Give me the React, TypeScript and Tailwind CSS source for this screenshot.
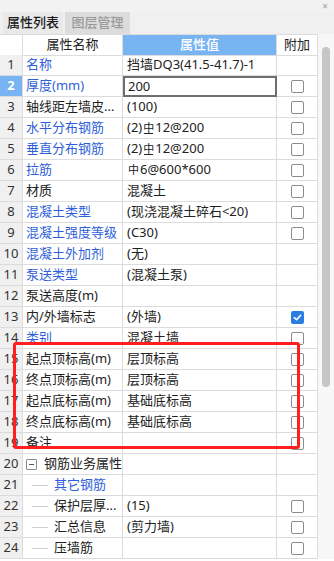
import type { ReactNode } from 'react';

const BLUE = 'text-[#2f5fd8]';

// rebar grade glyphs (HPB300 / HRB400)
function Bar({ grade }: { grade: 300 | 400 }) {
  return (
    <span className="relative inline-block text-[11px] leading-none mx-[1px] -translate-y-[1px]">
      中
      {grade === 400 && <span className="absolute left-[1px] right-[1px] bottom-[-1px] h-px bg-[#222]" />}
    </span>
  );
}

type Row = { name: ReactNode; value?: ReactNode; blue?: boolean; cb?: 'on' | 'off'; indent?: boolean; group?: boolean };

const rows: Row[] = [
  { name: '名称', value: '挡墙DQ3(41.5-41.7)-1', blue: true },
  { name: '厚度(mm)', value: '200', blue: true, cb: 'off' },
  { name: '轴线距左墙皮...', value: '(100)', cb: 'off' },
  { name: '水平分布钢筋', value: <>(2)<Bar grade={400} />12@200</>, blue: true, cb: 'off' },
  { name: '垂直分布钢筋', value: <>(2)<Bar grade={400} />12@200</>, blue: true, cb: 'off' },
  { name: '拉筋', value: <><Bar grade={300} />6@600*600</>, blue: true, cb: 'off' },
  { name: '材质', value: '混凝土', cb: 'off' },
  { name: '混凝土类型', value: '(现浇混凝土碎石<20)', blue: true, cb: 'off' },
  { name: '混凝土强度等级', value: '(C30)', blue: true, cb: 'off' },
  { name: '混凝土外加剂', value: '(无)', blue: true },
  { name: '泵送类型', value: '(混凝土泵)', blue: true },
  { name: '泵送高度(m)' },
  { name: '内/外墙标志', value: '(外墙)', cb: 'on' },
  { name: '类别', value: '混凝土墙', blue: true, cb: 'off' },
  { name: '起点顶标高(m)', value: '层顶标高', cb: 'off' },
  { name: '终点顶标高(m)', value: '层顶标高', cb: 'off' },
  { name: '起点底标高(m)', value: '基础底标高', cb: 'off' },
  { name: '终点底标高(m)', value: '基础底标高', cb: 'off' },
  { name: '备注', cb: 'off' },
  { name: '钢筋业务属性', group: true },
  { name: '其它钢筋', blue: true, indent: true },
  { name: '保护层厚...', value: '(15)', indent: true, cb: 'off' },
  { name: '汇总信息', value: '(剪力墙)', indent: true, cb: 'off' },
  { name: '压墙筋', indent: true, cb: 'off' },
];

function Check({ on }: { on: boolean }) {
  if (on)
    return (
      <span className="w-[13px] h-[13px] rounded-[2px] bg-[#2b7de0] flex items-center justify-center">
        <svg width="9" height="9" viewBox="0 0 10 10" fill="none" stroke="#fff" strokeWidth="1.8" strokeLinecap="round" strokeLinejoin="round">
          <path d="M1.5 5.2 4 7.5 8.5 2.5" />
        </svg>
      </span>
    );
  return <span className="w-[13px] h-[13px] rounded-[2px] border border-[#8c8c8c] bg-white" />;
}

export default function App() {
  return (
    <div
      className="relative w-[334px] h-[561px] bg-white overflow-hidden text-[13px] text-[#222]"
      style={{ fontFamily: '"Noto Sans", "Noto Sans CJK SC", sans-serif' }}
    >
      {/* title strip */}
      <div className="h-[12px] bg-[#f2f2f2] flex justify-end items-center pr-[6px]">
        <span className="text-[10px] leading-none text-[#9a9a9a]">×</span>
      </div>
      {/* tabs */}
      <div className="h-[22px] bg-[#f0f0f0] flex items-stretch pl-[3px] gap-[2px] border-l-[3px] border-[#e2e2e2] -ml-[3px]">
        <div className="w-[60px] bg-[#e9e9e9] flex items-center justify-center text-[#1a1a1a] font-medium">属性列表</div>
        <div className="w-[65px] bg-[#dcdcdc] flex items-center justify-center text-[#9a9a9a] font-medium">图层管理</div>
      </div>

      <div className="flex">
        <div className="w-[317px]">
          {/* header */}
          <div className="grid grid-cols-[23px_100px_154px_40px] h-[21px] border-t border-[#dcdcdc]">
            <div className="border-r border-b border-[#dcdcdc]" />
            <div className="border-r border-b border-[#dcdcdc] flex items-center justify-center">属性名称</div>
            <div className="bg-[#78b4f2] border-r border-b border-[#dcdcdc] flex items-center justify-center text-white font-medium">属性值</div>
            <div className="border-b border-[#dcdcdc] flex items-center justify-center">附加</div>
          </div>
          {rows.map((r, i) => {
            const sel = i === 1;
            return (
              <div key={i} className="grid grid-cols-[23px_100px_154px_40px] h-[21px]">
                <div
                  className={
                    sel
                      ? 'bg-[#78b4f2] text-white font-bold border-r border-b border-[#dcdcdc] flex items-center justify-center'
                      : 'bg-[#f0f0f0] text-[#333] border-r border-b border-[#dcdcdc] flex items-center justify-center'
                  }
                >
                  {i + 1}
                </div>
                <div className={`border-r border-b border-[#dcdcdc] flex items-center whitespace-nowrap overflow-hidden ${r.blue ? BLUE : ''}`}>
                  {r.group ? (
                    <>
                      <span className="ml-[3px] w-[11px] h-[11px] border border-[#8c8c8c] rounded-[1px] flex items-center justify-center">
                        <span className="w-[5px] h-px bg-[#555]" />
                      </span>
                      <span className="ml-[7px] text-[#222]">{r.name}</span>
                    </>
                  ) : r.indent ? (
                    <>
                      <span className="ml-[9px] w-[16px] h-px bg-[#d0d0d0]" />
                      <span className="ml-[6px]">{r.name}</span>
                    </>
                  ) : (
                    <span className="ml-[3px]">{r.name}</span>
                  )}
                </div>
                <div
                  className={
                    sel
                      ? 'border-2 border-[#6e6e6e] flex items-center pl-[3px] whitespace-nowrap overflow-hidden'
                      : 'border-r border-b border-[#dcdcdc] flex items-center pl-[4px] whitespace-nowrap overflow-hidden'
                  }
                >
                  {r.value}
                </div>
                <div className="border-b border-[#dcdcdc] flex items-center justify-center">
                  {r.cb && <Check on={r.cb === 'on'} />}
                </div>
              </div>
            );
          })}
        </div>
        {/* scrollbar */}
        <div className="w-[17px] h-[525px] border-l border-[#dcdcdc] bg-[#f7f7f7] pt-[13px] pl-[4px]">
          <div className="w-[8px] h-[340px] rounded-full bg-[#c6c6c6]" />
        </div>
      </div>

      {/* red annotation frame */}
      <div className="absolute left-[13px] top-[342px] w-[287px] h-[107px] border-[3px] border-[#ff1f1f] rounded-[3px] pointer-events-none" />
    </div>
  );
}
